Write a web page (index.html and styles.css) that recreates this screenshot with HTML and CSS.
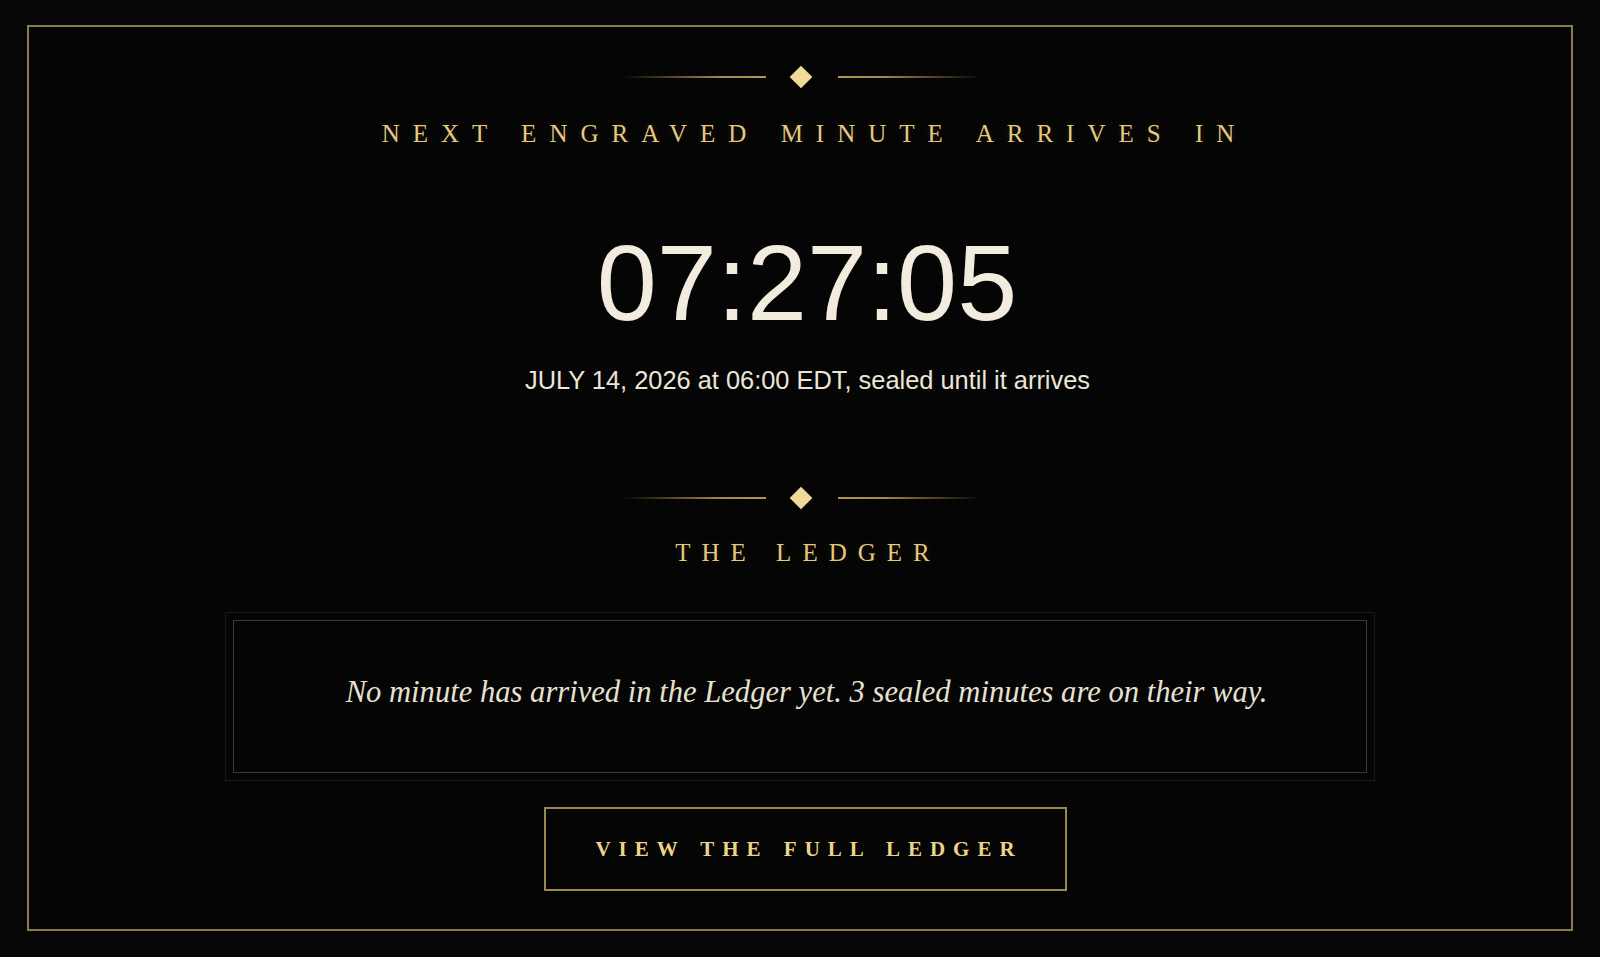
FILE: index.html
```html
<!DOCTYPE html>
<html lang="en">
<head>
<meta charset="utf-8">
<title>The Ledger</title>
<link rel="stylesheet" href="styles.css">
</head>
<body>
<main class="frame">
  <div class="divider">
    <span class="rule rule-left"></span>
    <span class="gem"></span>
    <span class="rule rule-right"></span>
  </div>
  <h2 class="eyebrow eyebrow-next">Next engraved minute arrives in</h2>
  <div class="countdown">07:27:05</div>
  <p class="release">JULY 14, 2026 at 06:00 EDT, sealed until it arrives</p>

  <div class="divider divider-ledger">
    <span class="rule rule-left"></span>
    <span class="gem"></span>
    <span class="rule rule-right"></span>
  </div>
  <h2 class="eyebrow eyebrow-ledger">The Ledger</h2>

  <section class="ledger">
    <div class="ledger-inner">
      <p class="ledger-empty">No minute has arrived in the Ledger yet. 3 sealed minutes are on their way.</p>
    </div>
  </section>

  <a class="ledger-link" href="#">View the full ledger</a>
</main>
</body>
</html>
```

FILE: styles.css
```css
* {
  box-sizing: border-box;
}

html,
body {
  height: 100%;
}

body {
  margin: 0;
  padding: 25px 27px 26px 27px;
  background: #060606;
  display: flex;
  font-family: "Liberation Serif", "Times New Roman", serif;
}

/* Gold hairline frame around the whole page */
.frame {
  flex: 1;
  display: flex;
  flex-direction: column;
  align-items: center;
  padding: 39px 0 0;
  border: 2px solid #8c7a4f;
  background: #050505;
}

/* Ornamental divider: fading rules with a diamond in the middle */
.divider {
  display: flex;
  align-items: center;
  height: 22px;
  margin-left: 4px;
}

.rule {
  display: block;
  width: 144px;
  height: 2px;
}

.rule-left {
  margin-right: 24px;
  background: linear-gradient(to right, rgba(176, 145, 80, 0), #a88a4c 70%, #b3944f);
}

.rule-right {
  margin-left: 26px;
  background: linear-gradient(to left, rgba(176, 145, 80, 0), #a88a4c 70%, #b3944f);
}

.gem {
  display: block;
  width: 16px;
  height: 16px;
  margin: 0 3px;
  background: #f1da98;
  transform: rotate(45deg);
}

.eyebrow {
  margin: 31px 0 0;
  padding-left: 29px;
  font-family: "Liberation Serif", "Times New Roman", serif;
  font-weight: 400;
  font-size: 25px;
  line-height: 30px;
  letter-spacing: 13px;
  word-spacing: 2px;
  text-transform: uppercase;
  color: #e4c97f;
  text-shadow: 0 1px 2px rgba(0, 0, 0, 0.9), 0 0 6px rgba(214, 180, 100, 0.18);
}

.eyebrow-ledger {
  margin-top: 29px;
  padding-left: 16px;
  letter-spacing: 11px;
}

.countdown {
  margin-top: 80px;
  padding-left: 14px;
  font-family: "Liberation Sans", Arial, sans-serif;
  font-size: 108px;
  line-height: 108px;
  color: #f1ecdd;
}

.release {
  margin: 28px 0 0;
  padding-left: 15px;
  font-family: "Liberation Sans", Arial, sans-serif;
  font-size: 25.4px;
  line-height: 30px;
  color: #ebe6d8;
}

.divider-ledger {
  margin-top: 92px;
}

/* Double-ruled panel holding the ledger entries */
.ledger {
  width: 1150px;
  margin-top: 44px;
  padding: 7px;
  border: 1px solid #1b1915;
}

.ledger-inner {
  padding: 53px 0 62px 13px;
  border: 1px solid #3c3934;
  text-align: center;
}

.ledger-empty {
  margin: 0;
  font-family: "Liberation Serif", "Times New Roman", serif;
  font-style: italic;
  font-size: 30.6px;
  line-height: 36px;
  color: #e7e1d1;
}

.ledger-link {
  display: block;
  margin: 26px 0 0 10px;
  width: 523px;
  height: 84px;
  border: 2px solid #9c8654;
  padding-left: 8px;
  font-family: "Liberation Serif", "Times New Roman", serif;
  font-weight: 700;
  font-size: 21px;
  line-height: 80px;
  letter-spacing: 8px;
  word-spacing: 2px;
  text-align: center;
  text-transform: uppercase;
  text-decoration: none;
  color: #ecd388;
  text-shadow: 0 1px 2px rgba(0, 0, 0, 0.9);
}
```
